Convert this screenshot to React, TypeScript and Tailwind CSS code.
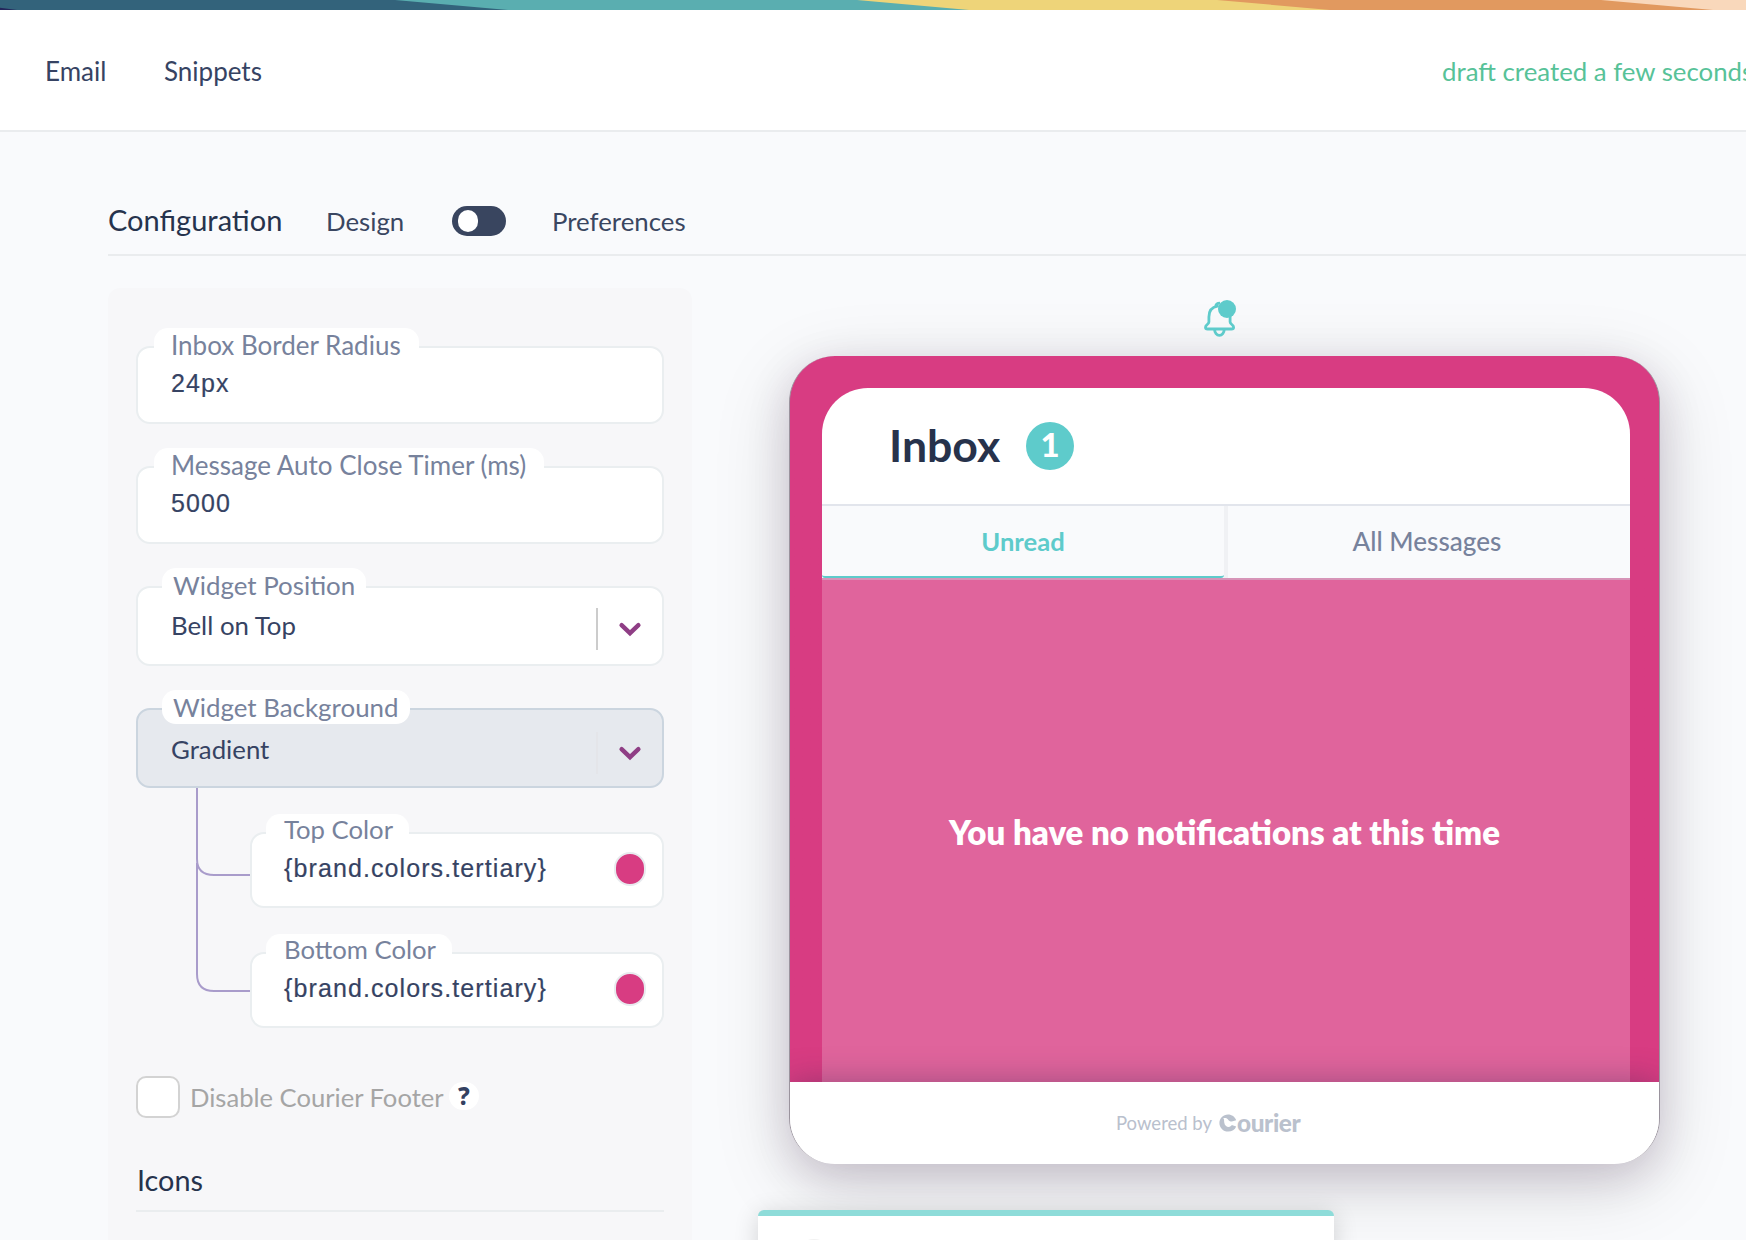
import type { ReactNode } from "react";

function StripeBar() {
  return (
    <svg className="block h-[10px] w-[1746px] shrink-0" viewBox="0 0 1746 10" preserveAspectRatio="none">
      <rect width="1746" height="10" fill="#33637b" />
      <path d="M0 7.8 L17 10 L0 10Z" fill="#24265b" />
      <path d="M395 0 H1746 V10 H508Z" fill="#5aaeb0" />
      <path d="M857 0 H1746 V10 H969Z" fill="#eed479" />
      <path d="M1217 0 H1746 V10 H1330Z" fill="#e1995f" />
      <path d="M1601 0 H1746 V10 H1713Z" fill="#f9d8bb" />
    </svg>
  );
}

function Chevron() {
  return (
    <svg className="h-4 w-6" viewBox="0 0 24 16" fill="none">
      <path d="M3.6 4.2 L12 12.2 L20.4 4.2" stroke="#8f3e85" strokeWidth="4.4" strokeLinecap="round" strokeLinejoin="miter" />
    </svg>
  );
}

function InputField({ label, value, className = "" }: { label: string; value: string; className?: string }) {
  return (
    <div className={`relative h-[78px] rounded-[14px] border-2 border-[#eaeef0] bg-white pt-[20px] pl-[33px] ${className}`}>
      <span className="absolute -top-[20px] left-4 h-8 rounded-t-[14px] bg-white pt-px pr-[18px] pl-[17px] text-[26px] leading-8 whitespace-nowrap text-[#77829c]">
        {label}
      </span>
      <p className="font-['Liberation_Sans',sans-serif] text-[25px] leading-[30px] tracking-[1.1px] text-[#364363] [-webkit-text-stroke:0.2px_#364363]">{value}</p>
    </div>
  );
}

function ColorField({ label, value }: { label: string; value: string }) {
  return (
    <div className="relative flex h-[76px] justify-between rounded-[14px] border-2 border-[#eaeef0] bg-white pt-[18px] pr-4 pl-[32px]">
      <span className="absolute -top-[20px] left-3.5 h-8 rounded-t-[14px] bg-white pt-px pr-4 pl-[18px] text-[25.7px] leading-7 whitespace-nowrap text-[#77829c]">
        {label}
      </span>
      <p className="mt-px font-['Liberation_Sans',sans-serif] text-[25px] leading-[30px] tracking-[1.1px] text-[#364363] [-webkit-text-stroke:0.2px_#364363]">{value}</p>
      <span className="h-[34px] w-8 rounded-full border-2 border-[#e8eaee] bg-[#d83c82]" />
    </div>
  );
}

function SelectField({ label, value, active = false }: { label: string; value: string; active?: boolean }) {
  return (
    <div
      className={`relative flex h-20 rounded-[14px] border-2 pl-[33px] ${
        active ? "border-[#cbd5df] bg-[#e6e9ee] pt-[23px]" : "border-[#eaeef0] bg-white pt-[21px]"
      }`}
    >
      <span className="absolute -top-[20px] left-6 h-[34px] rounded-[14px] bg-white px-[11px] pt-px text-[25.9px] leading-8 whitespace-nowrap text-[#77829c]">
        {label}
      </span>
      <p className="mt-px flex-1 text-[25.8px] leading-[30px] text-[#364363]">{value}</p>
      <span className={`-mt-px h-[42px] w-[2px] ${active ? "bg-[#e4e5e9]" : "bg-[#cccccc]"}`} />
      <span className="mt-[12px] mr-5 ml-[20px]">
        <Chevron />
      </span>
    </div>
  );
}

function ConfigPanel() {
  return (
    <aside className="h-[1000px] w-[584px] shrink-0 rounded-t-[12px] bg-[#f7f7f9] px-7 pt-[58px]">
      <InputField label="Inbox Border Radius" value="24px" />
      <InputField label="Message Auto Close Timer (ms)" value="5000" className="mt-[42px]" />
      <div className="mt-[42px]">
        <SelectField label="Widget Position" value="Bell on Top" />
      </div>
      <div className="mt-[42px]">
        <SelectField label="Widget Background" value="Gradient" active />
      </div>
      <div className="-mt-[2px] flex">
        <svg className="h-[242px] w-[114px] shrink-0" viewBox="0 0 114 242" fill="none" stroke="#a99ccb" strokeWidth="2">
          <path d="M61 0 V73 Q61 89 78 89 H114" />
          <path d="M61 77 V188 Q61 205 78 205 H114" />
        </svg>
        <div className="flex flex-1 flex-col gap-11 pt-[46px]">
          <ColorField label="Top Color" value="{brand.colors.tertiary}" />
          <ColorField label="Bottom Color" value="{brand.colors.tertiary}" />
        </div>
      </div>
      <div className="mt-12 flex h-[42px] items-center">
        <span className="h-[42px] w-11 rounded-[10px] border-2 border-[#d3d3d3] bg-white" />
        <span className="ml-[10px] w-[259px] text-[25.6px] leading-[42px] text-[#a5a5a5]">Disable Courier Footer</span>
        <span className="-mt-0.5 h-7 w-[30px] rounded-full bg-white text-center font-['Noto_Sans',sans-serif] text-2xl leading-7 font-extrabold text-[#344161]">
          ?
        </span>
      </div>
      <h2 className="mt-[44px] h-[50px] border-b-2 border-[#eaedef] pt-px pl-px text-[28.8px] leading-[34px] text-[#26334d]">Icons</h2>
    </aside>
  );
}

function Bell() {
  return (
    <svg className="ml-[438px] h-[50px] w-[50px]" viewBox="0 0 50 50" fill="none" stroke="#5ecbcb" strokeWidth="2.8">
      <path
        d="M21.5 14.2 C15.8 15.2 12.9 19.5 12.9 25 V30 C12.9 32.4 9.5 32.6 9.5 35.2 C9.5 36.6 10.3 37 11.6 37 H35.4 C36.8 37 37.6 36.6 37.6 35.2 C37.6 32.6 34.1 32.4 34.1 30 V24"
        strokeLinecap="round"
      />
      <path d="M19.8 14.6 C19.8 12.4 21.4 11.2 24 11.2" />
      <path d="M18.6 37.4 a4.8 6 0 0 0 9.6 0" />
      <circle cx="31" cy="17" r="9" fill="#5ecbcb" stroke="none" />
    </svg>
  );
}

function CourierLogo() {
  return (
    <span className="flex text-[#bac1cd]">
      <svg className="mt-[4px] h-[18px] w-[18px]" viewBox="0 0 18 18">
        <path
          d="M9 0.4 C12.8 0.4 16.1 2.8 17.2 6.2 L12.8 7.6 C11.2 7.6 9.6 6.6 8.8 5.2 C7.8 4.2 6.2 3.6 4.2 4.2 C5.4 5.2 5 6.6 5.2 8.2 C5.6 11.6 7.6 12.9 9.6 12.9 C11.2 12.9 12.2 12 12.8 11 L17.2 12.4 C16 15.8 12.8 17.6 9.2 17.6 C4.2 17.6 0.4 13.8 0.4 9 C0.4 4.2 4.2 0.4 9 0.4Z"
          fill="currentColor"
        />
      </svg>
      <span className="-mt-px text-[24.4px] leading-[28px] font-black tracking-[-0.4px]">ourier</span>
    </span>
  );
}

function Tab({ children, active = false }: { children: ReactNode; active?: boolean }) {
  return (
    <div
      className={`text-center leading-[70px] ${
        active
          ? "w-[402px] rounded-b-[3px] border-b-2 border-[#5ecbcb] text-[25.6px] font-bold text-[#5ecbcb]"
          : "w-[406px] border-l-4 border-[#f0f1f4] pr-1 text-[26.1px] font-medium text-[#77829c]"
      }`}
    >
      {children}
    </div>
  );
}

function InboxCard() {
  return (
    <div className="mt-[14px] ml-[31px] flex h-[808px] w-[871px] flex-col overflow-hidden rounded-[46px] border-x border-[#9a939d] bg-linear-to-b from-[#d83c82] from-90% to-white to-90% shadow-[0_12px_42px_rgba(64,24,80,0.17),0_20px_80px_rgba(0,0,0,0.14)]">
      <div className="mt-8 ml-8 flex w-[808px] flex-1 flex-col overflow-hidden rounded-t-[46px]">
        <header className="flex h-[116px] shrink-0 items-start bg-white pl-[67px]">
          <h1 className="mt-[31px] w-[137px] text-[44.6px] leading-[52px] font-bold text-[#27324b]">Inbox</h1>
          <span className="mt-[34px] h-12 w-12 rounded-full bg-[#5ecbcb] text-center text-[33px] leading-[45px] font-black text-white">1</span>
        </header>
        <div className="flex h-[76px] shrink-0 border-y-2 border-t-[#e2e5ec] border-b-[#d794b8] bg-[#f9fafc]">
          <Tab active>Unread</Tab>
          <Tab>All Messages</Tab>
        </div>
        <div className="flex-1 bg-[#e0649c] pt-[232px] text-center text-[33px] leading-10 font-extrabold whitespace-nowrap text-white">
          <span className="-ml-[3px]">You have no notifications at this time</span>
        </div>
      </div>
      <footer className="flex h-[82px] shrink-0 bg-white pt-[26px] pl-[326px] shadow-[0_0_32px_rgba(64,44,80,0.42)]">
        <span className="w-[103px] pt-px text-[18.5px] leading-[29px] whitespace-nowrap text-[#b9c0cd]">Powered by</span>
        <span className="mt-[2px]">
          <CourierLogo />
        </span>
      </footer>
    </div>
  );
}

function Toast() {
  return (
    <div className="relative mt-[46px] h-[140px] w-[576px] rounded-[6px] border-t-[6px] border-[#8edcd9] bg-white shadow-[0_4px_24px_rgba(0,0,0,0.16)]">
      <span className="mt-[23px] ml-9 block h-10 w-10 rounded-full bg-[#f2f2f2]" />
    </div>
  );
}

export default function App() {
  return (
    <div className="flex h-[1240px] w-[1746px] flex-col overflow-hidden bg-[#f9fafc] font-['Lato',sans-serif]">
      <StripeBar />
      <nav className="flex h-[122px] shrink-0 items-center border-b-2 border-[#eaecee] bg-white pt-0.5 pl-[45px] text-[26px] text-[#364363]">
        <span className="w-[119px]">Email</span>
        <span>Snippets</span>
        <span className="ml-auto w-[304px] shrink-0 text-[25.8px] whitespace-nowrap text-[#57c298]">draft created a few seconds</span>
      </nav>
      <div className="ml-[108px] flex h-[124px] shrink-0 items-baseline border-b-2 border-[#eaecee] pt-[73px] text-[25.8px] leading-[30px] text-[#3a4661]">
        <h1 className="w-[218px] text-[29px] text-[#26334d]">Configuration</h1>
        <span className="w-[126px]">Design</span>
        <span className="mt-px flex h-[30px] w-[54px] items-center self-start rounded-[15px] bg-[#39455f] pl-[6px]">
          <span className="h-[22px] w-5 rounded-full bg-white" />
        </span>
        <span className="ml-[46px]">Preferences</span>
      </div>
      <main className="mt-8 ml-[108px] flex min-h-0 flex-1">
        <ConfigPanel />
        <section className="ml-[66px] pt-1">
          <Bell />
          <InboxCard />
          <Toast />
        </section>
      </main>
    </div>
  );
}
